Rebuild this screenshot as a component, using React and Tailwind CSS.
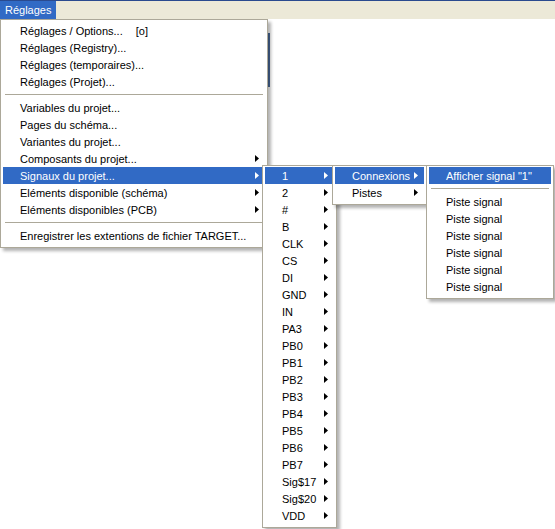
import React from "react";

const font = { fontFamily: '"Liberation Sans", Arial, sans-serif' };

function Arrow({ white }) {
  return (
    <svg width="4" height="7" viewBox="0 0 4 7" className="shrink-0">
      <path d="M0 0 L4 3.5 L0 7 Z" fill={white ? "#ffffff" : "#000000"} />
    </svg>
  );
}

function Item({ label, arrow, active, extra }) {
  return (
    <div
      className={`flex h-[17px] items-center pl-[17px] pr-[6px] text-[11px] leading-none whitespace-nowrap ${
        active ? "bg-[#316AC5] text-white" : "text-black"
      }`}
    >
      <span className="flex-1 pt-[2px]">
        {label}
        {extra}
      </span>
      {arrow && <Arrow white={active} />}
    </div>
  );
}

function Sep() {
  return (
    <div className="flex h-[9px] items-center px-[2px]">
      <div className="h-px w-full bg-[#ACA899]" />
    </div>
  );
}

function Menu({ className, children }) {
  return (
    <div
      className={`absolute border border-[#ACA899] bg-white px-[2px] pb-[3px] shadow-[3px_3px_3px_rgba(0,0,0,0.3)] ${className}`}
    >
      {children}
    </div>
  );
}

export default function App() {
  const signals = [
    "1", "2", "#", "B", "CLK", "CS", "DI", "GND", "IN", "PA3",
    "PB0", "PB1", "PB2", "PB3", "PB4", "PB5", "PB6", "PB7",
    "Sig$17", "Sig$20", "VDD",
  ];
  return (
    <div className="relative h-[529px] w-[555px] overflow-hidden bg-white" style={font}>
      <div className="h-px bg-[#2A4A8F]" />
      <div className="flex h-[18px] items-stretch bg-[#ECE9D8]">
        <div className="flex w-[56px] items-center bg-[#316AC5] pl-[5px] pt-px text-[11px] text-white">
          Réglages
        </div>
      </div>
      <div className="ml-[268px] mt-[14px] h-[54px] w-[2px] bg-[#4a6a9a]" />

      <Menu className="left-0 top-[19px] w-[268px] pt-[2px]">
        <Item
          label="Réglages / Options..."
          extra={<span className="ml-[13px]">[o]</span>}
        />
        <Item label="Réglages (Registry)..." />
        <Item label="Réglages (temporaires)..." />
        <Item label="Réglages (Projet)..." />
        <Sep />
        <Item label="Variables du projet..." />
        <Item label="Pages du schéma..." />
        <Item label="Variantes du projet..." />
        <Item label="Composants du projet..." arrow />
        <Item label="Signaux du projet..." arrow active />
        <Item label="Eléments disponible (schéma)" arrow />
        <Item label="Eléments disponibles (PCB)" arrow />
        <Sep />
        <Item label="Enregistrer les extentions de fichier TARGET..." />
      </Menu>

      <Menu className="left-[262px] top-[165px] w-[75px] pt-[1px]">
        {signals.map((s, i) => (
          <Item key={s} label={s} arrow active={i === 0} />
        ))}
      </Menu>

      <Menu className="left-[332px] top-[165px] w-[95px] pt-[1px]">
        <Item label="Connexions" arrow active />
        <Item label="Pistes" arrow />
      </Menu>

      <Menu className="left-[426px] top-[165px] w-[128px] pt-[1px]">
        <Item label={'Afficher signal "1"'} active />
        <Sep />
        {[0, 1, 2, 3, 4, 5].map((i) => (
          <Item key={i} label="Piste signal" />
        ))}
      </Menu>
    </div>
  );
}
